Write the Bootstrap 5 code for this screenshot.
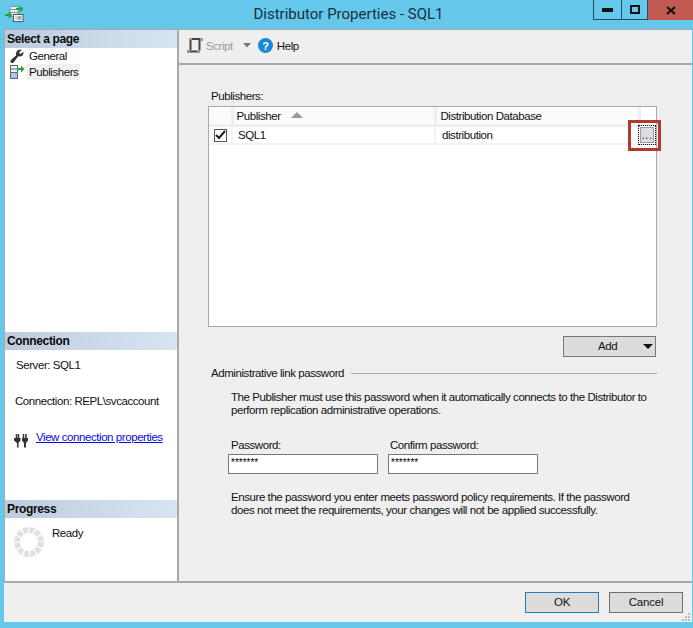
<!DOCTYPE html>
<html lang="en">
<head>
<meta charset="utf-8">
<title>Distributor Properties - SQL1</title>
<link href="https://cdn.jsdelivr.net/npm/bootstrap@5.3.0/dist/css/bootstrap.min.css" rel="stylesheet">
<style>
html,body{margin:0;height:628px;overflow:hidden;background:#65c8ea}
body,.form-control,.btn{font-family:"Liberation Sans",Arial,sans-serif;font-size:11.5px;line-height:14px;color:#111;letter-spacing:-.43px}
.win{width:693px;height:628px}
.titlebar{height:29px;background:#65c8ea}
.ticon{width:104px;padding:4px 0 0 5px}
.ttext{font-family:Roboto,sans-serif;font-size:15px;line-height:26px;color:#16303c;padding-top:1px;letter-spacing:0}
.wctrls{width:100px;height:20px}
.wc{height:20px;border:1px solid #1d5064;border-top:0;border-left-width:0;width:26px}
.wc:first-child{border-left-width:1px;width:29px}
.wc.closer{background:#c15a50;border:0;width:45px}
.bodywrap{margin:0 1px 0 4px;height:593px;background:#efefef;border-top:1px solid #a9a9a9}
.mainrow{height:553px;border-bottom:2px solid #a9a9a9}
.side{width:175px;background:#fff;border-right:2px solid #a9a9a9;border-left:1px solid #a9a9a9}
.sec1{height:302px}.sec2{height:168px}.sec3{height:81px}
.sechead{height:18px;line-height:18px;padding-left:2px;font-weight:700;font-size:12px;letter-spacing:-.35px;background:linear-gradient(90deg,#bdccdd,#d7e5f3);color:#0c0c0c}
.pageitem{height:16px;line-height:16px;padding-left:4px}
.pageitem svg{width:16px;height:16px;margin-right:4px}
.pagesel{background:#f0f0f0;padding:0 2px 0 2px;margin-left:-2px}
.info{padding:8px 0 0 11px}
.infogap{height:22px}
.conrow{padding-left:10px}
.link2{color:#0a0ae6;text-decoration:underline;white-space:nowrap}
.conlink{padding:22px 0 0 9px}
.toolbar{height:35px;border-bottom:2px solid #a9a9a9;padding:0 0 2px 8px}
.muted2{color:#9a9a9a}
.panel{padding:24px 0 0 29px;position:relative}
.pl{padding-left:3px;height:17px;line-height:14px}
.gridbox{width:449px;height:221px;border:1px solid #a9a9a9;background:#fff;position:relative}
.gridtbl{table-layout:fixed;width:447px;margin:0;border-collapse:collapse}
.gridtbl th,.gridtbl td{padding:0 0 0 4px;font-weight:400;background:#fff;box-shadow:none;color:#111;border:0}
.gridtbl th{height:18px;border-right:3px solid #eee;border-bottom:3px solid #eee;line-height:16px;background:#fbfbfb}
.gridtbl td{height:18px;border-right:2px solid #f2f2f2;border-bottom:2px solid #f2f2f2;line-height:16px}
.gridtbl td.nob,.gridtbl th.nob{border-right:0}
.gridtbl th.nob{border-bottom:3px solid #fff;background:#fff}
.gridtbl th.pubhead{padding-left:3px}
.ckbox{width:13px;height:13px;border:1px solid #555;background:#fff;margin:2px 0 0 1px}
.sorttri{width:0;height:0;border-left:6px solid transparent;border-right:6px solid transparent;border-bottom:6px solid #9a9a9a;margin:0 0 2px 10px}
.ellip{width:18px;height:20px;background:#dcdcdc;border:1px dotted #111;font-size:12px;line-height:16px;color:#5a2a8a;position:absolute;right:0;top:18px;padding:0;box-shadow:inset 0 0 0 1px #fff,inset 0 0 0 2px #8fa0b0;border-radius:0;letter-spacing:.5px}
.redbox{position:absolute;width:33px;height:31px;border:3px solid #b2392b;left:449px;top:55px;pointer-events:none}
.addrow{padding:9px 0 0 355px}
.addbtn{width:93px;height:21px;background:#dcdcdc;border:1px solid #777;border-radius:0;padding:0 0 0 34px;line-height:19px;color:#111}
.addtri{width:0;height:0;border-left:5px solid transparent;border-right:5px solid transparent;border-top:5px solid #111;margin-left:26px}
.fshead{width:449px;padding:9px 0 0 3px;line-height:14px}
.fsline{height:1px;background:#a9a9a9;margin-left:7px}
.para1{padding:11px 0 0 23px;line-height:13px;width:449px;white-space:nowrap}
.fieldsrow{padding:21px 0 0 20px}
.fld{width:150px;margin-right:10px}
.fld label{display:block;padding-left:3px;height:14px;line-height:14px;margin-bottom:2px}
.fld2 label{padding-left:2px}
.form-control.pw{width:150px;height:20px;padding:0 0 3px 2px;border:1px solid #777;border-radius:0;font-size:10px;line-height:12px;box-shadow:none;letter-spacing:0;color:#000}
.para2{padding:17px 0 0 23px;line-height:13px;white-space:nowrap}
.footbar{height:39px;padding:9px 9px 0 0;position:relative}
.dlgbtn{width:74px;height:21px;padding:0;background:#dcdcdc;border:1px solid #6f6f6f;border-radius:0;line-height:19px;color:#111;margin-left:10px;letter-spacing:-.2px}
.dlgbtn.primary2{border-color:#2a78b5}
.grip{position:absolute;right:1px;bottom:1px}
</style>
</head>
<body>
<div class="win d-flex flex-column">
  <div class="titlebar d-flex align-items-start">
    <div class="ticon flex-shrink-0">
      <svg width="19" height="18" viewBox="0 0 19 18"><rect x="5" y="2.500" width="8" height="10" fill="#e8eef4" stroke="#8796a4"/><path d="M5 5.500h8M5 8.500h8" stroke="#8796a4"/><path d="M11 4h3.500V1.500L18.500 5l-4 3.500V6H11z" fill="#1fa83a"/><path d="M0 10h3.500V7.500L7.500 11l-4 3.500V12H0z" fill="#1fa83a"/><rect x="8.500" y="10.500" width="9.500" height="7" fill="#fff" stroke="#4a5a66"/><path d="M10.500 13h1m1 0h4M10.500 15h1m1 0h4" stroke="#4a5a66"/></svg>
    </div>
    <div class="ttext flex-grow-1 text-center">Distributor Properties - SQL1</div>
    <div class="wctrls d-flex flex-shrink-0">
      <div class="wc d-flex align-items-center justify-content-center"><svg width="11" height="4"><rect width="11" height="4" y="0" fill="#111"/></svg></div>
      <div class="wc d-flex align-items-center justify-content-center"><svg width="10" height="9"><rect x="1" y="1" width="8" height="7" fill="none" stroke="#111" stroke-width="2"/></svg></div>
      <div class="wc closer d-flex align-items-center justify-content-center"><svg width="10" height="9"><path d="M1 1l8 7M9 1L1 8" stroke="#111" stroke-width="2.200"/></svg></div>
    </div>
  </div>
  <div class="bodywrap d-flex flex-column">
    <div class="mainrow d-flex">
      <div class="side flex-shrink-0 d-flex flex-column">
        <div class="sec1">
          <div class="sechead">Select a page</div>
          <div class="pageitem d-flex align-items-center mt-0">
            <svg viewBox="0 0 16 16"><path d="M2 14.500c-1-1-.8-1.800 0-2.500l5.200-4.800C6.500 5 7.500 2.500 10 1.800c1-.3 2-.2 2.800.2L10 4.500l1.500 1.800 2.800-2.500c.4 1 .2 2.500-.8 3.600-1.200 1.200-3 1.400-4.300.8L4.500 14.500c-.8.800-1.700.8-2.500 0z" fill="#333"/></svg><span>General</span>
          </div>
          <div class="pageitem d-flex align-items-center">
            <svg viewBox="0 0 16 16"><rect x="1.500" y="1.500" width="7" height="13" fill="#eef2f7" stroke="#666"/><path d="M1.500 5h7M1.500 8.500h7" stroke="#666"/><rect x="2" y="9" width="6" height="5" fill="#a6c8e8"/><path d="M8 4h4V1.500L15.500 5 12 8.500V6H8z" fill="#1fa83a"/></svg><span class="pagesel">Publishers</span>
          </div>
        </div>
        <div class="sec2">
          <div class="sechead">Connection</div>
          <div class="info">Server: SQL1</div>
          <div class="infogap"></div>
          <div class="conrow">Connection: REPL\svcaccount</div>
          <div class="conlink d-flex align-items-start">
            <svg class="mt-1" style="margin-right:8px" width="14" height="14" viewBox="0 0 14 14"><path d="M2.500 0v4M4.500 0v4M9.500 0v4M12 0v4" stroke="#333" stroke-width="1.500"/><path d="M0 4h6.500v2.500L4.500 9v4.500H3V9L0 6.500zM8 4h6v2.500L12 9v4.500h-2V9L8 6.500z" fill="#333"/></svg>
            <span class="link2">View connection properties</span>
          </div>
        </div>
        <div class="sec3">
          <div class="sechead">Progress</div>
          <div class="d-flex">
            <svg class="flex-shrink-0" style="margin:8px 0 0 8px" width="32" height="32" viewBox="0 0 32 32"><circle cx="16" cy="16" r="12" fill="none" stroke="#e0e0e0" stroke-width="6" stroke-dasharray="4.980 1.300"/></svg>
            <div style="padding:8px 0 0 7px">Ready</div>
          </div>
        </div>
      </div>
      <div class="flex-grow-1 d-flex flex-column">
        <div class="toolbar d-flex align-items-center">
          <svg width="17" height="17" viewBox="0 0 17 17" fill="none"><path d="M3.500 2h11M3.500 2v11M12.500 2v11.500M0.500 14.500h11" stroke="#444" stroke-width="2"/><path d="M2 1h3v2H2zM13 1h3v3h-3zM0 13h3v3H0zM10 13h3v3h-3z" fill="#999"/></svg>
          <span class="muted2" style="margin-left:2px">Script</span>
          <svg style="margin-left:10px" width="8" height="5"><path d="M0 0h8L4 4.500z" fill="#777"/></svg>
          <svg style="margin-left:7px" width="15" height="15" viewBox="0 0 15 15"><circle cx="7.500" cy="7.500" r="7.500" fill="#1a86d6"/><text x="7.500" y="11.500" text-anchor="middle" font-family="Liberation Sans" font-weight="700" font-size="11" fill="#fff">?</text></svg>
          <span style="margin-left:4px">Help</span>
        </div>
        <div class="panel">
          <div class="pl">Publishers:</div>
          <div class="gridbox">
            <table class="table gridtbl">
              <colgroup><col style="width:23px"><col style="width:203px"><col style="width:204px"><col></colgroup>
              <thead><tr><th></th><th class="pubhead"><div class="d-flex align-items-center">Publisher<span class="sorttri"></span></div></th><th>Distribution Database</th><th class="nob"></th></tr></thead>
              <tbody><tr>
                <td class="p-0 ps-1"><div class="ckbox d-flex align-items-center justify-content-center"><svg width="11" height="10" viewBox="0 0 11 10"><path d="M1 5l3 3 6-7" fill="none" stroke="#222" stroke-width="2"/></svg></div></td>
                <td style="padding-left:5px">SQL1</td>
                <td style="padding-left:6px">distribution</td>
                <td class="nob"></td>
              </tr></tbody>
            </table>
            <button class="ellip btn" type="button">...</button>
          </div>
          <div class="redbox"></div>
          <div class="addrow"><button class="btn addbtn d-flex align-items-center" type="button">Add<span class="addtri"></span></button></div>
          <div class="fshead d-flex align-items-center"><span>Administrative link password</span><div class="fsline flex-grow-1"></div></div>
          <div class="para1">The Publisher must use this password when it automatically connects to the Distributor to<br>perform replication administrative operations.</div>
          <div class="fieldsrow d-flex">
            <div class="fld"><label for="pw1">Password:</label><input id="pw1" class="form-control pw" type="text" value="*******"></div>
            <div class="fld fld2"><label for="pw2">Confirm password:</label><input id="pw2" class="form-control pw" type="text" value="*******"></div>
          </div>
          <div class="para2">Ensure the password you enter meets password policy requirements. If the password<br>does not meet the requirements, your changes will not be applied successfully.</div>
        </div>
      </div>
    </div>
    <div class="footbar d-flex justify-content-end">
      <button class="btn dlgbtn primary2" type="button">OK</button>
      <button class="btn dlgbtn" type="button">Cancel</button>
      <svg class="grip" width="9" height="9"><path d="M6 1h2v2H6zM3 4h2v2H3zM6 4h2v2H6zM0 7h2v2H0zM3 7h2v2H3zM6 7h2v2H6z" fill="#bbb"/></svg>
    </div>
  </div>
</div>
<script src="https://cdn.jsdelivr.net/npm/bootstrap@5.3.0/dist/js/bootstrap.bundle.min.js"></script>
</body>
</html>
